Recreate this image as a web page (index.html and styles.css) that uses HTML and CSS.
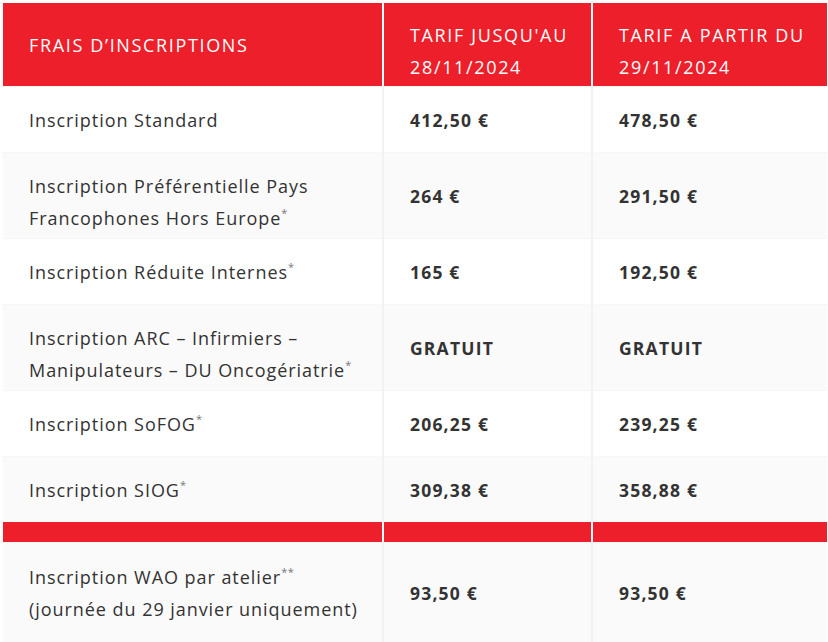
FILE: index.html
```html
<!DOCTYPE html>
<html lang="fr">
<head>
<meta charset="utf-8">
<title>Frais d'inscriptions</title>
<link rel="stylesheet" href="styles.css">
</head>
<body>
<div class="wrap">
<table class="tarifs">
  <colgroup>
    <col class="c1"><col class="c2"><col class="c3">
  </colgroup>
  <thead>
    <tr class="r-head">
      <th>FRAIS D’INSCRIPTIONS</th>
      <th class="multi">TARIF JUSQU'AU<br>28/11/2024</th>
      <th class="multi">TARIF A PARTIR DU<br>29/11/2024</th>
    </tr>
  </thead>
  <tbody>
    <tr class="r-s odd">
      <td>Inscription Standard</td>
      <td class="price">412,50 €</td>
      <td class="price">478,50 €</td>
    </tr>
    <tr class="r-m even">
      <td class="multi">Inscription Préférentielle Pays<br>Francophones Hors Europe<sup>*</sup></td>
      <td class="price">264 €</td>
      <td class="price">291,50 €</td>
    </tr>
    <tr class="r-s odd">
      <td>Inscription Réduite Internes<sup>*</sup></td>
      <td class="price">165 €</td>
      <td class="price">192,50 €</td>
    </tr>
    <tr class="r-m even">
      <td class="multi">Inscription ARC – Infirmiers –<br>Manipulateurs – DU Oncogériatrie<sup>*</sup></td>
      <td class="price">GRATUIT</td>
      <td class="price">GRATUIT</td>
    </tr>
    <tr class="r-s odd">
      <td>Inscription SoFOG<sup>*</sup></td>
      <td class="price">206,25 €</td>
      <td class="price">239,25 €</td>
    </tr>
    <tr class="r-s even">
      <td>Inscription SIOG<sup>*</sup></td>
      <td class="price">309,38 €</td>
      <td class="price">358,88 €</td>
    </tr>
    <tr class="r-sep">
      <td></td><td></td><td></td>
    </tr>
    <tr class="r-l even">
      <td>Inscription WAO par atelier<sup>**</sup><br>(journée du 29 janvier uniquement)</td>
      <td class="price">93,50 €</td>
      <td class="price">93,50 €</td>
    </tr>
  </tbody>
</table>
</div>
</body>
</html>
```

FILE: styles.css
```css
html, body {
  margin: 0;
  padding: 0;
  background: #ffffff;
  overflow: hidden;
}

.wrap {
  padding: 3px 0 0 3px;
}

.tarifs {
  width: 824px;
  table-layout: fixed;
  border-collapse: separate;
  border-spacing: 0;
  font-family: "Open Sans", "Noto Sans", sans-serif;
  color: #333333;
}

.c1 { width: 381px; }
.c2 { width: 209px; }
.c3 { width: 234px; }

.tarifs th,
.tarifs td {
  box-sizing: border-box;
  padding: 0 8px 0 26px;
  vertical-align: middle;
  text-align: left;
  line-height: 32px;
}

.tarifs th {
  background: #ec1f2b;
  color: #ffffff;
  font-size: 18px;
  font-weight: 500;
  letter-spacing: 1.65px;
  border-right: 2px solid #ffffff;
}

.tarifs th:last-child,
.tarifs td:last-child {
  border-right: none;
}

.tarifs td {
  font-size: 18px;
  font-weight: 400;
  letter-spacing: 0.95px;
  border-right: 2px solid #f2f2f2;
  border-top: 1px solid #f6f6f6;
}

.tarifs .multi {
  padding-top: 13px;
}

.tarifs td.price {
  font-size: 17.5px;
  font-weight: 700;
  letter-spacing: 1.2px;
}

.r-head { height: 83px; }
.r-s { height: 66px; }
.r-m { height: 86px; }
.r-l { height: 100px; }

.odd td { background: #ffffff; }
.even td { background: #fafafa; }

.r-sep { height: 20px; }
.r-sep td {
  background: #ec1f2b;
  border-top: none;
  border-right: 2px solid #ffffff;
  padding: 0;
  line-height: 0;
}

.tarifs sup {
  font-size: 11px;
  line-height: 0;
  vertical-align: baseline;
  position: relative;
  top: -8px;
  color: #777777;
  letter-spacing: 0.5px;
}
```
